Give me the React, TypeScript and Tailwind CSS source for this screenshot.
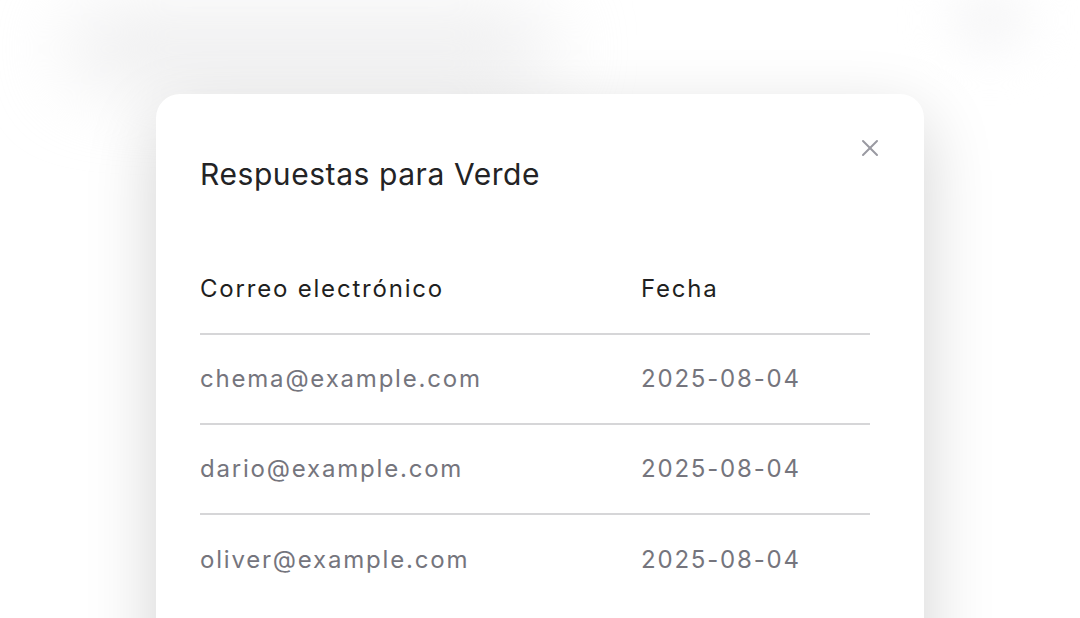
import { X } from 'lucide-react';

const RESPONSES = [
  { email: 'chema@example.com', date: '2025-08-04' },
  { email: 'dario@example.com', date: '2025-08-04' },
  { email: 'oliver@example.com', date: '2025-08-04' },
];

export default function App(): JSX.Element {
  return (
    <div
      className="relative h-[618px] w-[1080px] overflow-hidden bg-white"
      style={{ fontFamily: 'Inter, "Noto Sans", sans-serif' }}
    >
      {/* contenido de fondo difuminado */}
      <div className="absolute left-[70px] top-[18px] h-[62px] w-[480px] rounded-full bg-[#e9e9ea] blur-2xl" />
      <div className="absolute left-[950px] top-[-10px] h-[60px] w-[80px] rounded-full bg-[#f6f6f7] blur-xl" />

      <div className="relative flex justify-center pt-[94px]">
        <div className="relative h-[600px] w-[768px] rounded-[24px] bg-white px-[44px] pt-[62px] shadow-[0_24px_70px_rgba(0,0,0,0.18)]">
          <button
            type="button"
            aria-label="Cerrar"
            className="absolute right-[40px] top-[40px] flex h-[28px] w-[28px] items-center justify-center text-[#9a9aa2]"
          >
            <X className="h-[30px] w-[30px]" strokeWidth={1.7} />
          </button>

          <h2 className="text-[30px] font-normal leading-[36px] tracking-[0.019em] text-[#232325]">
            Respuestas para Verde
          </h2>

          <table className="mt-[52px] w-[670px] table-fixed border-collapse text-left text-[24px] tracking-[1.8px]">
            <thead>
              <tr className="h-[90px]">
                <th className="w-[441px] font-normal text-[#1f1f21]">Correo electrónico</th>
                <th className="font-normal text-[#1f1f21]">Fecha</th>
              </tr>
            </thead>
            <tbody>
              {RESPONSES.map((row) => (
                <tr key={row.email} className="h-[90px] border-t-2 border-[#d6d6d8]">
                  <td className="text-[#75757d]">{row.email}</td>
                  <td className="text-[#75757d]">{row.date}</td>
                </tr>
              ))}
            </tbody>
          </table>
        </div>
      </div>
    </div>
  );
}
